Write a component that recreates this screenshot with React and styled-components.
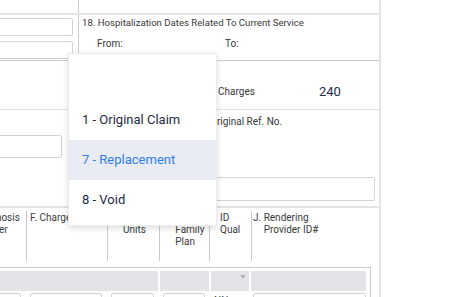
import React from "react";
import styled, { createGlobalStyle } from "styled-components";

const Global = createGlobalStyle`
  html, body { margin: 0; padding: 0; background: #fff; overflow: hidden; }
  body { font-family: Roboto, "Noto Sans", Arial, sans-serif; }
  * { box-sizing: border-box; }
`;

const Page = styled.div`
  position: relative;
  width: 473px;
  height: 297px;
  overflow: hidden;
  background: #fff;
`;

const Form = styled.div`
  margin-left: -50px;
  width: 431px;
  border-right: 2px solid #e3e3e3;
  color: #383838;
  font-size: 10px;
`;

const Row = styled.div`
  display: grid;
  grid-template-columns: 129px 1fr;
  height: ${(p) => p.$h}px;
  box-sizing: content-box;
  border-bottom: ${(p) => p.$line};
`;

const LeftCell = styled.div`
  display: flex;
  flex-direction: column;
  gap: 5px;
  padding: ${(p) => p.$pad || "0"};
  border-right: ${(p) => (p.$divider ? "1px solid #cbcbcb" : "none")};
`;

const RightCell = styled.div`
  display: flex;
  flex-direction: column;
  padding: ${(p) => p.$pad || "0 0 0 3px"};
`;

const TextInput = styled.div`
  height: ${(p) => p.$h || 18}px;
  border: 1px solid #d2d2d2;
  border-radius: 2px;
  background: #fff;
`;

const Title = styled.div`
  font-size: 9.6px;
  line-height: 14px;
  white-space: nowrap;
`;

const Pair = styled.div`
  display: grid;
  grid-template-columns: ${(p) => p.$cols};
  align-items: center;
  margin-top: ${(p) => p.$mt || 0}px;
  padding-left: ${(p) => p.$pl || 0}px;
  line-height: 14px;
  white-space: nowrap;
`;

const Amount = styled.span`
  font-size: 13px;
  color: #1e2a45;
`;

const Spacer = styled.div`
  height: ${(p) => p.$h}px;
`;

const TableSection = styled.div`
  padding-top: 3px;
`;

const HeaderGrid = styled.div`
  display: grid;
  grid-template-columns: 76px 81px 52px 50px 42px 1fr;
`;

const HeadCell = styled.div`
  display: flex;
  height: 50px;
  padding-top: 1px;
  padding-left: ${(p) => p.$pl}px;
  border-left: ${(p) => (p.$first ? "none" : "1px solid #cacaca")};
  line-height: 12px;
  color: #3a3a3a;
  white-space: nowrap;
`;

const Prefix = styled.span`
  margin-right: 2.5px;
`;

const HeadText = styled.div`
  display: flex;
  flex-direction: column;
`;

const LinesBox = styled.div`
  margin-top: 6px;
  margin-right: 8px;
  border: 1px solid #cccccc;
  border-left: none;
  padding: 3px 4px 0 0;
  display: flex;
  flex-direction: column;
  gap: 2px;
`;

const GrayRow = styled.div`
  display: grid;
  grid-template-columns: 1fr 49px 38px 115px;
  gap: 2px;
  height: 20px;
`;

const GrayCell = styled.div`
  background: #e4e3e8;
  display: flex;
  justify-content: flex-end;
  padding: 4px 3px 0 0;
`;

const Caret = styled.span`
  width: 0;
  height: 0;
  border-left: 3.5px solid transparent;
  border-right: 3.5px solid transparent;
  border-top: 4px solid #b4b4bc;
`;

const InputRow = styled.div`
  display: grid;
  grid-template-columns: 1fr 72px 43px 42px 30px 113px;
  column-gap: 9px;
`;

const CellText = styled.div`
  line-height: 12px;
  padding-top: 2px;
  color: #3a3a3a;
`;

const Menu = styled.div`
  position: absolute;
  left: 68px;
  top: 53px;
  width: 149px;
  padding: 6px 0 5px;
  background: #fff;
  border: 1px solid #ececec;
  border-radius: 2px;
  box-shadow: 0 2px 6px rgba(0, 0, 0, 0.14);
`;

const MenuItem = styled.div`
  height: 40px;
  line-height: 40px;
  padding-left: 13px;
  font-size: 13px;
  color: ${(p) => (p.$active ? "#2f7de6" : "#1e2a45")};
  background: ${(p) => (p.$active ? "#e9ecf4" : "transparent")};
  white-space: nowrap;
`;

const headers = [
  { p: "E.", lines: ["Diagnosis", "Pointer"], pl: 15 },
  { p: "F.", lines: ["Charges"], pl: 3 },
  { p: "G.", lines: ["Days or", "Units"], pl: 3 },
  { p: "H.", lines: ["EPSDT", "Family", "Plan"], pl: 3 },
  { p: "", lines: ["ID", "Qual"], pl: 10 },
  { p: "J.", lines: ["Rendering", "Provider ID#"], pl: 1 },
];

const options = [
  { label: "", active: false },
  { label: "1 - Original Claim", active: false },
  { label: "7 - Replacement", active: true },
  { label: "8 - Void", active: false },
];

export default function App() {
  return (
    <Page>
      <Global />
      <Form>
        <Row $h={13} $line="2px solid #e4e4e4">
          <LeftCell $divider />
          <RightCell />
        </Row>
        <Row $h={45} $line="1px solid #cdcdcd">
          <LeftCell $divider $pad="3px 5px 0 0">
            <TextInput />
            <TextInput />
          </LeftCell>
          <RightCell $pad="1px 0 0 3px">
            <Title>18. Hospitalization Dates Related To Current Service</Title>
            <Pair $cols="128px 1fr" $mt={7} $pl={15}>
              <span>From:</span>
              <span>To:</span>
            </Pair>
          </RightCell>
        </Row>
        <Row $h={48} $line="1px solid #e0e0e0">
          <LeftCell />
          <RightCell $pad="24px 0 0 3px">
            <Pair $cols="128px 109px 1fr">
              <span>20. Outside Lab?</span>
              <span>$ Charges</span>
              <Amount>240</Amount>
            </Pair>
          </RightCell>
        </Row>
        <Row $h={96} $line="2px solid #e4e4e4">
          <LeftCell $pad="25px 17px 0 0">
            <TextInput $h={23} />
          </LeftCell>
          <RightCell $pad="5px 4px 0 3px">
            <Pair $cols="128px 1fr">
              <span>22. Resubmission Code</span>
              <span>Original Ref. No.</span>
            </Pair>
            <Spacer $h={48} />
            <TextInput $h={24} />
          </RightCell>
        </Row>
        <TableSection>
          <HeaderGrid>
            {headers.map((h, i) => (
              <HeadCell key={i} $pl={h.pl} $first={i === 0}>
                {h.p && <Prefix>{h.p}</Prefix>}
                <HeadText>
                  {h.lines.map((l) => (
                    <span key={l}>{l}</span>
                  ))}
                </HeadText>
              </HeadCell>
            ))}
          </HeaderGrid>
          <LinesBox>
            <GrayRow>
              <GrayCell />
              <GrayCell />
              <GrayCell>
                <Caret />
              </GrayCell>
              <GrayCell />
            </GrayRow>
            <InputRow>
              <TextInput $h={20} />
              <TextInput $h={20} />
              <TextInput $h={20} />
              <TextInput $h={20} />
              <CellText>NN</CellText>
              <TextInput $h={20} />
            </InputRow>
          </LinesBox>
        </TableSection>
      </Form>
      <Menu>
        {options.map((o, i) => (
          <MenuItem key={i} $active={o.active}>
            {o.label}
          </MenuItem>
        ))}
      </Menu>
    </Page>
  );
}
